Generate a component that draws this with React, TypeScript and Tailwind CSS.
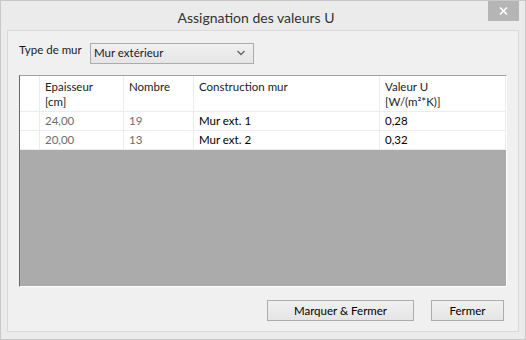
const font = { fontFamily: 'Lato, "Noto Sans", sans-serif' };

const cols = [
  { w: "w-[20px]", label: null },
  { w: "w-[84px]", label: ["Epaisseur", "[cm]"] },
  { w: "w-[70px]", label: ["Nombre"] },
  { w: "w-[186px]", label: ["Construction mur"] },
  { w: "flex-1", label: ["Valeur U", "[W/(m²*K)]"] },
];

const rows = [
  ["24,00", "19", "Mur ext. 1", "0,28"],
  ["20,00", "13", "Mur ext. 2", "0,32"],
];

export default function App() {
  return (
    <div
      className="w-[526px] h-[340px] bg-[#ebebeb] border border-[#c8c8c8] flex flex-col text-[11.5px] text-[#1a1a1a]"
      style={font}
    >
      <div className="h-[29px] flex items-start relative">
        <div className="flex-1 text-center text-[14px] text-[#333] pt-[6px] pr-[14px]">Assignation des valeurs U</div>
        <div className="absolute right-[6px] top-0 w-[31px] h-[20px] bg-[#b5b5b5] flex items-center justify-center">
          <svg width="9" height="8" viewBox="0 0 9 8">
            <path d="M1 0.5 L8 7.5 M8 0.5 L1 7.5" stroke="white" strokeWidth="1.6" />
          </svg>
        </div>
      </div>
      <div className="mx-[6px] mb-[7px] flex-1 bg-[#f0f0f0] border border-[#dadada] flex flex-col px-[11px]">
        <div className="flex items-center gap-[12px] mt-[11px] h-[22px]">
          <span className="w-[59px] -mt-[6px] whitespace-nowrap">Type de mur</span>
          <div className="w-[164px] h-[21px] border border-[#acacac] bg-gradient-to-b from-[#f0f0f0] to-[#e5e5e5] flex items-center justify-between pl-[3px] pr-[8px]">
            <span>Mur extérieur</span>
            <svg width="8" height="6" viewBox="0 0 8 6">
              <path d="M0.5 1 L4 4.5 L7.5 1" stroke="#666" strokeWidth="1.4" fill="none" />
            </svg>
          </div>
        </div>
        <div className="mt-[11px] w-[488px] h-[212px] border-t border-t-[#a0a0a0] border-l border-l-[#696969] border-r border-r-white border-b border-b-white flex flex-col bg-[#ababab]">
          <div className="flex h-[36px] bg-white border-b border-[#e8ecf4]">
            {cols.map((c, i) => (
              <div key={i} className={`${c.w} border-r border-[#e8ecf4] pl-[5px] pt-[3px] leading-[15px] text-[#222]`}>
                {c.label?.map((l) => (
                  <div key={l}>{l}</div>
                ))}
              </div>
            ))}
          </div>
          {rows.map((r, ri) => (
            <div key={ri} className="flex h-[19px] bg-white border-b border-[#e8ecf4]">
              <div className="w-[20px] border-r border-[#e8ecf4]" />
              {r.map((v, i) => (
                <div
                  key={i}
                  className={`${cols[i + 1].w} border-r border-[#e8ecf4] pl-[5px] leading-[18px] ${i < 2 ? "text-[#6d6d6d]" : "text-black"}`}
                >
                  {v}
                </div>
              ))}
            </div>
          ))}
        </div>
        <div className="flex justify-end gap-[17px] mt-[13px] pr-[3px]">
          <button className="w-[147px] h-[21px] border border-[#adadad] bg-gradient-to-b from-[#f0f0f0] to-[#e5e5e5] text-black">
            Marquer &amp; Fermer
          </button>
          <button className="w-[73px] h-[21px] border border-[#adadad] bg-gradient-to-b from-[#f0f0f0] to-[#e5e5e5] text-black">
            Fermer
          </button>
        </div>
      </div>
    </div>
  );
}
